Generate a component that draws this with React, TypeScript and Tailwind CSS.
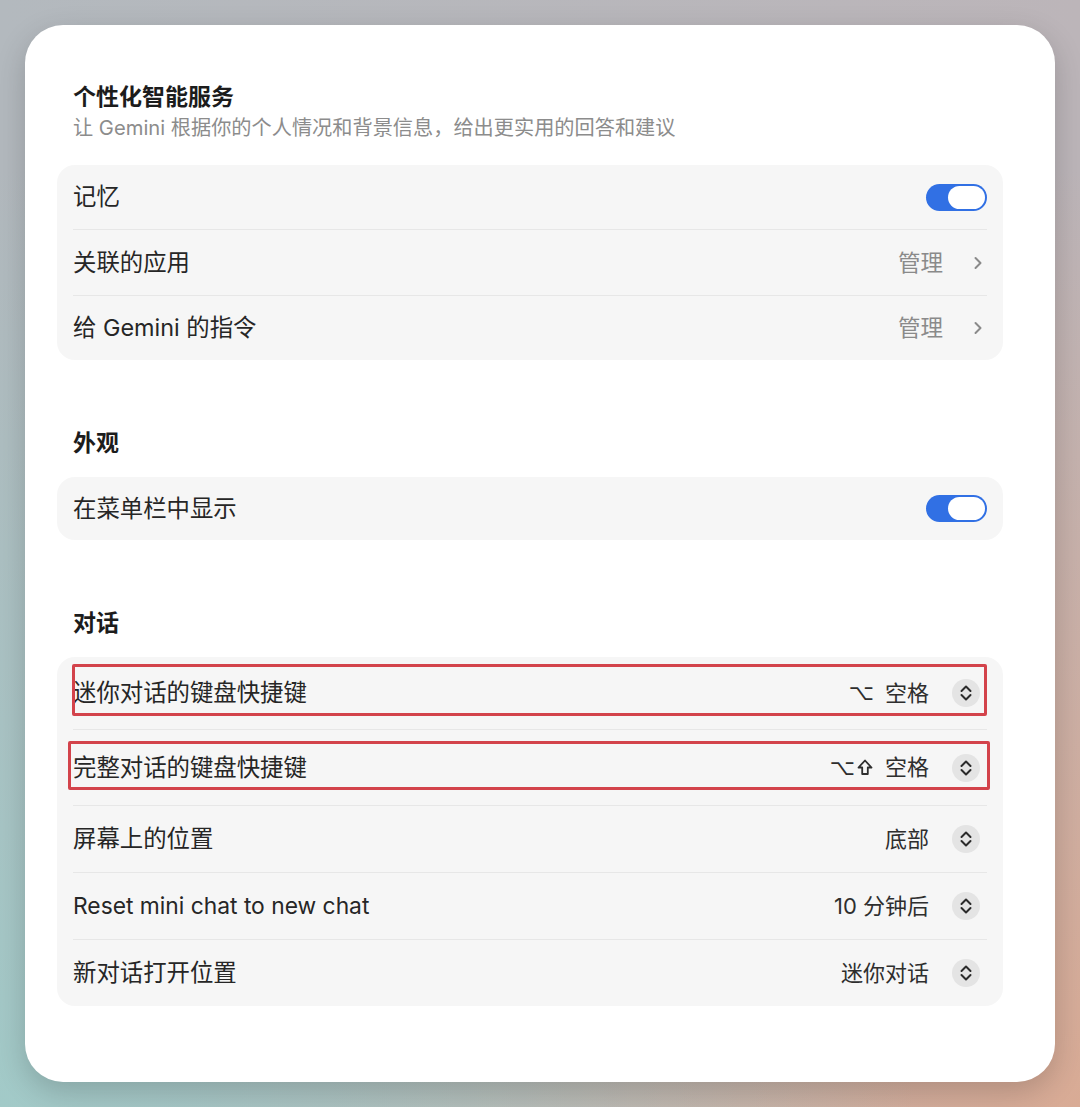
import React from "react";

const font = { fontFamily: '"Inter", "Noto Sans CJK SC", sans-serif' };

const Toggle = () => (
  <div className="w-[61px] h-[27px] rounded-full bg-[#3170e4] p-[2px] flex justify-end">
    <div className="w-[37px] h-[23px] rounded-full bg-white" />
  </div>
);

const Chevron = () => (
  <svg width="10" height="16" viewBox="0 0 10 16" fill="none" className="ml-[30px] mr-[4px]">
    <path d="M2.5 3 L7.5 8 L2.5 13" stroke="#8a8a8a" strokeWidth="2" strokeLinecap="round" strokeLinejoin="round" />
  </svg>
);

const Stepper = () => (
  <div className="ml-[23px] w-[28px] h-[28px] rounded-full bg-[#e4e4e4] flex items-center justify-center">
    <svg width="14" height="18" viewBox="0 0 14 18" fill="none">
      <path d="M2.5 7 L7 2.5 L11.5 7" stroke="#2b2b2b" strokeWidth="2" strokeLinecap="round" strokeLinejoin="round" />
      <path d="M2.5 11 L7 15.5 L11.5 11" stroke="#2b2b2b" strokeWidth="2" strokeLinecap="round" strokeLinejoin="round" />
    </svg>
  </div>
);

const ShiftIcon = () => (
  <svg width="16" height="17" viewBox="0 0 16 17" fill="none" className="ml-[2px]">
    <path
      d="M8 1.5 L14.5 8.5 H10.8 V15 H5.2 V8.5 H1.5 Z"
      stroke="#2e2e2e"
      strokeWidth="1.8"
      strokeLinejoin="round"
    />
  </svg>
);

const Divider = () => <div className="mx-4 h-px bg-[#e7e7e7]" />;

const SectionTitle = ({ children }: { children: React.ReactNode }) => (
  <h2 className="pl-4 text-[23px] leading-[30px] font-semibold text-[#1c1c1c]">{children}</h2>
);

type Row = {
  label: string;
  right: React.ReactNode;
  h: string;
  box?: string;
  size?: string;
};

const Group = ({ rows }: { rows: Row[] }) => (
  <div className="rounded-[18px] bg-[#f6f6f6]">
    {rows.map((r, i) => (
      <React.Fragment key={r.label}>
        {i > 0 && <Divider />}
        <div className={`relative flex items-center justify-between pl-4 pr-4 ${r.h}`}>
          <span className={`${r.size ?? "text-[23.4px]"} text-[#262626]`}>{r.label}</span>
          <div className="flex items-center">{r.right}</div>
          {/* red annotation box */}
          {r.box && <div className={`absolute border-[3px] border-[#d3434b] rounded-[2px] ${r.box}`} />}
        </div>
      </React.Fragment>
    ))}
  </div>
);

const Value = ({ children }: { children: React.ReactNode }) => (
  <span className="text-[22px] text-[#2e2e2e] flex items-center">{children}</span>
);

const Manage = () => (
  <>
    <span className="text-[22.5px] text-[#8a8a8a]">管理</span>
    <Chevron />
  </>
);

const OptKey = () => (
  <span style={{ fontFamily: '"DejaVu Sans", sans-serif' }} className="text-[22px] leading-none">
    ⌥
  </span>
);

export default function App() {
  return (
    <div
      style={font}
      className="min-h-[1107px] w-full p-[25px] bg-[radial-gradient(ellipse_at_0%_100%,#a2cac8_0%,transparent_60%),radial-gradient(ellipse_at_100%_100%,#d9ab95_0%,transparent_60%),linear-gradient(90deg,#b3b9be,#bcb5b9)]"
    >
      <div className="h-[1057px] rounded-[38px] bg-white shadow-[0_10px_30px_rgba(0,0,0,0.18)] pl-[32px] pr-[52px] pt-[57px]">
        {/* personalized services */}
        <SectionTitle>个性化智能服务</SectionTitle>
        <p className="mt-[3px] pl-4 text-[20.2px] leading-[26px] text-[#8c8c8c]">
          让 Gemini 根据你的个人情况和背景信息，给出更实用的回答和建议
        </p>
        <div className="mt-[24px]">
          <Group
            rows={[
              { label: "记忆", right: <Toggle />, h: "h-[64px]" },
              { label: "关联的应用", right: <Manage />, h: "h-[65px]" },
              { label: "给 Gemini 的指令", right: <Manage />, h: "h-[64px]" },
            ]}
          />
        </div>

        {/* appearance */}
        <div className="mt-[68px]">
          <SectionTitle>外观</SectionTitle>
        </div>
        <div className="mt-[19px]">
          <Group rows={[{ label: "在菜单栏中显示", right: <Toggle />, h: "h-[63px]" }]} />
        </div>

        {/* conversation */}
        <div className="mt-[68px]">
          <SectionTitle>对话</SectionTitle>
        </div>
        <div className="mt-[19px]">
          <Group
            rows={[
              {
                label: "迷你对话的键盘快捷键",
                right: (
                  <>
                    <Value>
                      <OptKey />
                      <span className="ml-[11px]">空格</span>
                    </Value>
                    <Stepper />
                  </>
                ),
                h: "h-[72px] pr-[23px]",
                box: "left-[15px] right-[16px] top-[7px] bottom-[13px]",
              },
              {
                label: "完整对话的键盘快捷键",
                right: (
                  <>
                    <Value>
                      <OptKey />
                      <ShiftIcon />
                      <span className="ml-[12px]">空格</span>
                    </Value>
                    <Stepper />
                  </>
                ),
                h: "h-[75px] pr-[23px]",
                box: "left-[11px] right-[13px] top-[11px] bottom-[15px]",
              },
              {
                label: "屏幕上的位置",
                right: (
                  <>
                    <Value>底部</Value>
                    <Stepper />
                  </>
                ),
                h: "h-[66px] pr-[23px]",
              },
              {
                label: "Reset mini chat to new chat",
                size: "text-[22.8px]",
                right: (
                  <>
                    <Value>10 分钟后</Value>
                    <Stepper />
                  </>
                ),
                h: "h-[66px] pr-[23px]",
              },
              {
                label: "新对话打开位置",
                right: (
                  <>
                    <Value>迷你对话</Value>
                    <Stepper />
                  </>
                ),
                h: "h-[66px] pr-[23px]",
              },
            ]}
          />
        </div>
      </div>
    </div>
  );
}
